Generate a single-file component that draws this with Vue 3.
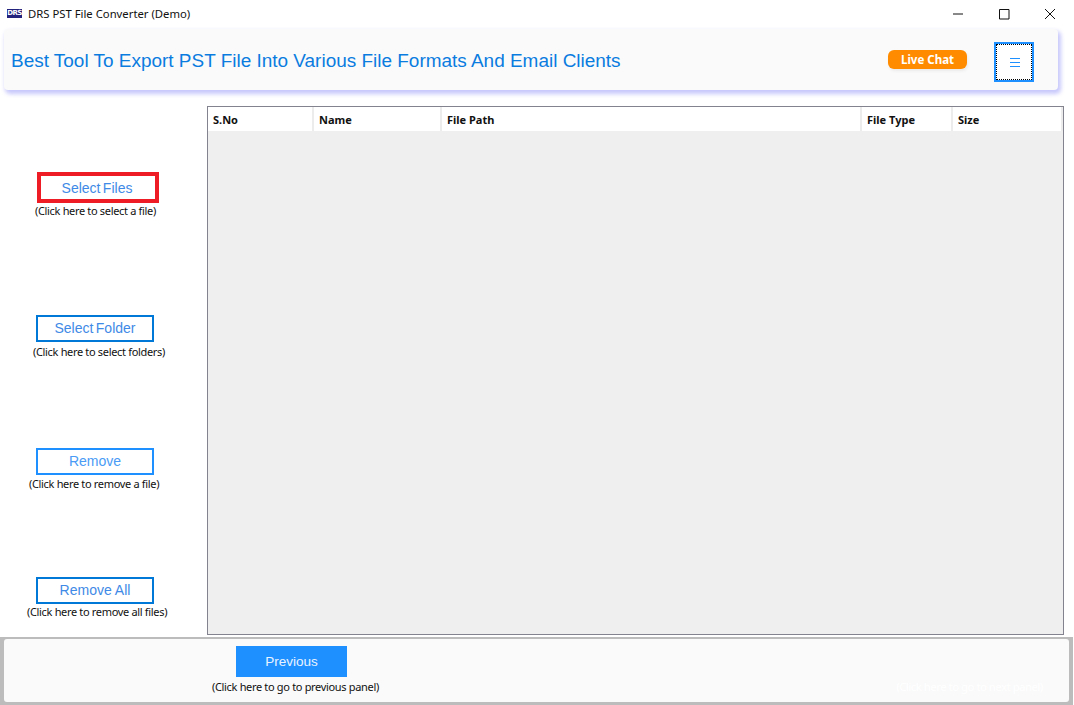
<script setup>
const columns = [
  { label: 'S.No', width: 106 },
  { label: 'Name', width: 128 },
  { label: 'File Path', width: 420 },
  { label: 'File Type', width: 91 },
  { label: 'Size', width: 110 }
]
const actions = [
  { label: 'Select Files', hint: '(Click here to select a file)', cls: 'files' },
  { label: 'Select Folder', hint: '(Click here to select folders)', cls: 'folder' },
  { label: 'Remove', hint: '(Click here to remove a file)', cls: 'remove' },
  { label: 'Remove All', hint: '(Click here to remove all files)', cls: 'all' }
]
</script>

<template>
  <div class="app">
    <div class="titlebar">
      <span class="logo">DRS</span>
      <span class="title">DRS PST File Converter (Demo)</span>
      <div class="controls">
        <svg class="ctl" width="12" height="12" viewBox="0 0 12 12"><path d="M1 6h10" stroke="#111" fill="none" /></svg>
        <svg class="ctl" width="12" height="12" viewBox="0 0 12 12"><path d="M1.500 1.500h9.500v9.500H1.500z" stroke="#111" fill="none" /></svg>
        <svg class="ctl" width="12" height="12" viewBox="0 0 12 12"><path d="M1 1l10 10M11 1L1 11" stroke="#111" fill="none" /></svg>
      </div>
    </div>

    <header class="banner">
      <h1>Best Tool To Export PST File Into Various File Formats And Email Clients</h1>
      <span class="chat">Live Chat</span>
      <button class="menu" type="button">
        <span class="menu-focus">
          <svg width="12" height="12" viewBox="0 0 12 12"><path d="M1 1.500h10M1 5.500h10M1 9.500h10" stroke="#1e90ff" fill="none" /></svg>
        </span>
      </button>
    </header>

    <main class="content">
      <aside class="side">
        <div v-for="a in actions" :key="a.cls" class="group" :class="a.cls">
          <button class="act" type="button">{{ a.label }}</button>
          <p class="hint">{{ a.hint }}</p>
        </div>
      </aside>
      <section class="table">
        <div class="thead">
          <div v-for="c in columns" :key="c.label" class="th" :style="{ width: c.width + 'px' }">{{ c.label }}</div>
        </div>
      </section>
    </main>

    <footer class="footer">
      <div class="panel">
        <div class="prev-wrap">
          <button class="prev" type="button">Previous</button>
          <p class="hint prev-hint">(Click here to go to previous panel)</p>
        </div>
        <p class="hint next-hint">(Click here to go to next panel)</p>
      </div>
    </footer>
  </div>
</template>

<style scoped>
.app {
  width: 1074px;
  height: 705px;
  overflow: hidden;
  display: flex;
  flex-direction: column;
  background: #fff;
  font-family: "Liberation Sans", Arial, sans-serif;
}
.titlebar {
  height: 29px;
  flex: none;
  display: flex;
  align-items: center;
  padding-left: 7px;
  padding-bottom: 3px;
  box-sizing: border-box;
}
.logo {
  width: 15px;
  height: 9px;
  background: #23237e;
  color: #fff;
  font: bold 7px/9px "DejaVu Sans", sans-serif;
  letter-spacing: -0.5px;
  text-align: center;
  overflow: hidden;
}
.title {
  margin-left: 6px;
  font: 11.3px "Noto Sans", sans-serif;
  color: #111;
}
.controls {
  margin-left: auto;
  display: flex;
  gap: 34px;
  padding-right: 18px;
  margin-top: 1px;
}
.ctl {
  display: block;
}
.banner {
  height: 61px;
  flex: none;
  margin: 0 16px 0 4px;
  box-sizing: border-box;
  background: #fafafa;
  border-radius: 4px;
  box-shadow: 2px 3px 4px 1px #c8c8fc;
  display: flex;
  align-items: center;
  padding-left: 7px;
}
h1 {
  margin: 2px 0 0;
  font-size: 18.97px;
  font-weight: 400;
  color: #0a7ce0;
  white-space: nowrap;
}
.chat {
  margin-left: auto;
  width: 79px;
  height: 19px;
  border-radius: 6px;
  background: #ff8c00;
  color: #fff;
  font: bold 11.5px/19px "Noto Sans", sans-serif;
  text-align: center;
  box-shadow: 1px 2px 3px #eaeaea;
}
.menu {
  width: 40px;
  height: 40px;
  margin: 5px 24px 0 27px;
  padding: 0;
  background: #fff;
  border: 2px solid #1e90ff;
  box-sizing: border-box;
}
.menu-focus {
  display: flex;
  width: 100%;
  height: 100%;
  box-sizing: border-box;
  border: 1px dotted #000;
  align-items: center;
  justify-content: center;
  padding-top: 2px;
  padding-left: 2px;
}
.content {
  flex: none;
  height: 531px;
  margin-top: 16px;
  display: flex;
}
.side {
  width: 207px;
  flex: none;
}
.group {
  display: flex;
  flex-direction: column;
  align-items: flex-start;
}
.act {
  width: 118px;
  height: 27px;
  margin: 0 0 0 36px;
  padding: 0 0 2px;
  box-sizing: border-box;
  background: #fff;
  border: 2px solid #0078d7;
  color: #3f8ae6;
  font: 14px "Liberation Sans", Arial, sans-serif;
}
.hint {
  margin: 0;
  font: 11px/16px "Noto Sans", sans-serif;
  letter-spacing: -0.33px;
  color: #111;
  white-space: nowrap;
}
.files {
  padding-top: 66px;
}
.files .act {
  width: 122px;
  height: 31px;
  margin-left: 37px;
  padding: 0 2px 0 0;
  border: 4px solid #ee1c25;
  word-spacing: -1.5px;
}
.files .hint {
  margin: 0 0 0 35px;
}
.folder {
  padding-top: 96px;
}
.folder .act {
  word-spacing: -1.5px;
}
.folder .hint {
  margin: 2px 0 0 33px;
}
.remove {
  padding-top: 88px;
}
.remove .act {
  border-color: #1e90ff;
  color: #4a9bf5;
}
.remove .hint {
  margin: 1px 0 0 29px;
}
.all {
  padding-top: 85px;
}
.all .hint {
  margin: 0 0 0 27px;
}
.table {
  width: 857px;
  height: 529px;
  box-sizing: border-box;
  border: 1px solid #83838f;
  background: #efefef;
}
.thead {
  display: flex;
  height: 24px;
}
.th {
  box-sizing: border-box;
  flex: none;
  background: #fff;
  border-right: 2px solid #ececec;
  padding-left: 5px;
  font: bold 11px/25px "Noto Sans", sans-serif;
  color: #111;
}
.footer {
  flex: 1;
  min-height: 0;
  margin-right: 1px;
  background: #bcbcbc;
  padding: 2px 4px 3px;
  box-sizing: border-box;
}
.panel {
  height: 100%;
  background: #fafafa;
  border-radius: 3px;
  display: flex;
  justify-content: space-between;
  position: relative;
}
.prev-wrap {
  margin-left: 208px;
  padding-top: 7px;
  display: flex;
  flex-direction: column;
  align-items: flex-start;
}
.prev {
  width: 111px;
  height: 31px;
  margin-left: 24px;
  padding: 0;
  border: 0;
  background: #1e90ff;
  color: #e8f3ff;
  font: 13.5px "Liberation Sans", Arial, sans-serif;
}
.prev-hint {
  margin-top: 2px;
}
.next-hint {
  margin: 40px 26px 0 0;
  color: #ffffff;
}
</style>
